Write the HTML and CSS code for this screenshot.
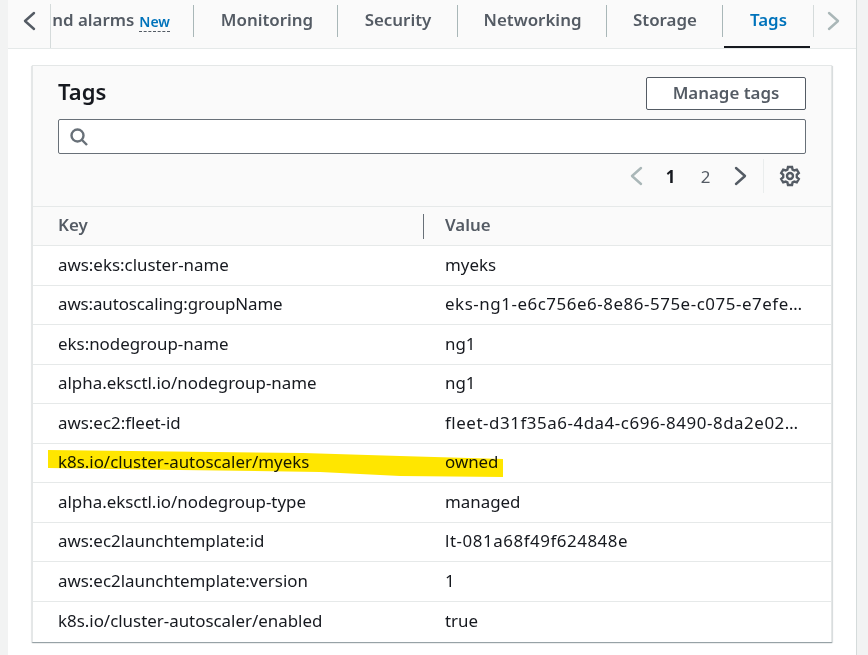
FILE: index.html
```html
<!DOCTYPE html>
<html lang="en">
<head>
<meta charset="utf-8">
<title>Tags</title>
<link rel="stylesheet" href="styles.css">
</head>
<body>
<div class="page">
  <main class="main">
    <nav class="tabbar">
      <button class="arrow arrow-left" aria-label="Previous">
        <svg width="16" height="20" viewBox="0 0 16 20"><path d="M13 2 4 10l9 8" class="chev"/></svg>
      </button>
      <div class="tabs">
        <div class="tab tab-first"><span class="clipped">nd alarms</span> <span class="new">New</span></div>
        <div class="tab tab-mon">Monitoring</div>
        <div class="tab tab-sec">Security</div>
        <div class="tab tab-net">Networking</div>
        <div class="tab tab-sto">Storage</div>
        <div class="tab tab-tags">Tags</div>
      </div>
      <button class="arrow arrow-right" aria-label="Next">
        <svg width="16" height="20" viewBox="0 0 16 20"><path d="M3 2l9 8-9 8" class="chev chev-off"/></svg>
      </button>
    </nav>
    <section class="card">
      <header class="card-head">
        <div class="title-row">
          <h2 class="title">Tags</h2>
          <button class="manage">Manage tags</button>
        </div>
        <div class="search">
          <svg width="20" height="20" viewBox="0 0 20 20"><circle cx="8.5" cy="8.5" r="6" class="ico"/><path d="M13 13l5 5" class="ico"/></svg>
        </div>
        <div class="pager">
          <svg class="pg-prev" width="14" height="20" viewBox="0 0 14 20"><path d="M12 2 3 10l9 8" class="chev chev-off"/></svg>
          <span class="pg pg-on">1</span>
          <span class="pg">2</span>
          <svg class="pg-next" width="14" height="20" viewBox="0 0 14 20"><path d="M2 2l9 8-9 8" class="chev chev-dark"/></svg>
          <span class="pg-sep"></span>
          <svg class="gear" width="22" height="22" viewBox="0 0 22 22"><path class="ico" d="M9 2h4l.6 2.6 1.7.9 2.5-.9 2 3.4-2 1.8v2.4l2 1.8-2 3.4-2.5-.9-1.7.9L13 20H9l-.6-2.6-1.7-.9-2.5.9-2-3.4 2-1.8V9.8l-2-1.8 2-3.4 2.5.9 1.7-.9z"/><circle class="ico" cx="11" cy="11" r="3"/></svg>
        </div>
      </header>
      <div class="thead">
        <div class="th th-key">Key</div>
        <div class="th th-val">Value</div>
      </div>
      <div class="row"><div class="k">aws:eks:cluster-name</div><div class="v">myeks</div></div>
      <div class="row"><div class="k k-tight">aws:autoscaling:groupName</div><div class="v v-id">eks-ng1-e6c756e6-8e86-575e-c075-e7efe…</div></div>
      <div class="row"><div class="k">eks:nodegroup-name</div><div class="v">ng1</div></div>
      <div class="row"><div class="k">alpha.eksctl.io/nodegroup-name</div><div class="v">ng1</div></div>
      <div class="row"><div class="k">aws:ec2:fleet-id</div><div class="v v-id">fleet-d31f35a6-4da4-c696-8490-8da2e02…</div></div>
      <div class="row"><div class="k">k8s.io/cluster-autoscaler/myeks</div><div class="v">owned</div></div>
      <div class="row"><div class="k">alpha.eksctl.io/nodegroup-type</div><div class="v">managed</div></div>
      <div class="row"><div class="k">aws:ec2launchtemplate:id</div><div class="v v-id">lt-081a68f49f624848e</div></div>
      <div class="row"><div class="k">aws:ec2launchtemplate:version</div><div class="v">1</div></div>
      <div class="row"><div class="k">k8s.io/cluster-autoscaler/enabled</div><div class="v">true</div></div>
    </section>
  </main>
  <svg class="marker" width="868" height="655" viewBox="0 0 868 655"><path d="M48 450 303 453 400 456 503 459 503 477 400 476 320 472 180 470 48 468Z" fill="#ffe600"/></svg>
</div>
</body>
</html>
```
FILE: styles.css
```css
* { box-sizing: border-box; }
html, body { margin: 0; padding: 0; }
body {
  width: 868px;
  height: 655px;
  overflow: hidden;
  background: #f2f3f3;
  font-family: "Noto Sans", "Open Sans", sans-serif;
  color: #16191f;
}
.page { position: relative; width: 868px; height: 655px; }
.main {
  width: 849px;
  height: 655px;
  margin-left: 8px;
  background: #fff;
  border-right: 1px solid #d5dbdb;
}
.tabbar {
  display: flex;
  align-items: stretch;
  height: 49px;
  background: #fafafa;
  border-bottom: 1px solid #e5e9e9;
}
.arrow {
  border: 0;
  padding: 0;
  background: none;
  display: flex;
  align-items: center;
}
.arrow-left { width: 42px; justify-content: flex-start; padding-left: 13px; padding-bottom: 6px; }
.arrow-right { width: 42px; padding-left: 12px; padding-bottom: 6px; }
.chev { fill: none; stroke: #545b64; stroke-width: 2.4; stroke-linecap: round; stroke-linejoin: round; }
.chev-off { stroke: #aab7b8; }
.chev-dark { stroke: #545b64; }
.tabs {
  flex: 1;
  display: flex;
  overflow: hidden;
  border-left: 1px solid #d5dbdb;
  margin: 4px 0 0;
  position: relative;
}
.tab {
  height: 44px;
  display: flex;
  align-items: center;
  justify-content: center;
  gap: 5px;
  font-size: 16.9px;
  font-weight: 600;
  color: #545b64;
  padding-bottom: 14px;
  white-space: nowrap;
  position: relative;
}
.tab::after {
  content: "";
  position: absolute;
  right: 0;
  top: 1px;
  height: 32px;
  width: 1px;
  background: #a9b7b8;
}
.tab-first { width: 143px; justify-content: flex-end; padding-right: 24px; }
.tab-mon { width: 144px; padding-left: 2px; }
.tab-sec { width: 120px; }
.tab-net { width: 149px; }
.tab-sto { width: 116px; }
.tab-tags { width: 91px; color: #0073bb; }
.tab-tags::before {
  content: "";
  position: absolute;
  left: 1px;
  right: 4px;
  bottom: 0;
  height: 2px;
  background: #16191f;
}
.tab-tags::after { background: #d5dbdb; }
.new {
  font-size: 14px;
  color: #0073bb;
  border-bottom: 1px dashed #545b64;
  line-height: 19px;
  margin-top: 6px;
}
.card {
  width: 800px;
  height: 577px;
  margin: 16px 0 0 24px;
  background: #fff;
  border: 1px solid #e4e7e7;
  border-bottom: 0;
  box-shadow: 0 1px 1px 0 rgba(0, 28, 36, .3), 1px 1px 1px 0 rgba(0, 28, 36, .1), -1px 1px 1px 0 rgba(0, 28, 36, .05);
}
.card-head {
  height: 141px;
  padding: 11px 25px 0 25px;
  background: #fafafa;
  border-bottom: 1px solid #e6e9e9;
}
.title-row { display: flex; justify-content: space-between; align-items: center; height: 33px; }
.title { margin: 0 0 4px; font-size: 22px; font-weight: 600; line-height: 29px; color: #16191f; }
.manage {
  width: 160px;
  height: 33px;
  border: 1px solid #545b64;
  border-radius: 2px;
  background: #fff;
  font-family: inherit;
  font-size: 16.9px;
  font-weight: 600;
  color: #545b64;
  padding: 0 0 3px;
}
.search {
  height: 35px;
  margin-top: 9px;
  background: #fff;
  border: 1px solid #687078;
  border-radius: 2px;
  display: flex;
  align-items: center;
  padding-left: 10px;
}
.ico { fill: none; stroke: #687078; stroke-width: 2.4; }
.gear .ico { stroke: #545b64; }
.pager {
  display: flex;
  align-items: center;
  justify-content: flex-end;
  height: 34px;
  margin-top: 5px;
  padding-right: 5px;
}
.pg { width: 35px; text-align: center; font-size: 16.9px; color: #545b64; }
.pg-on { font-weight: 700; color: #16191f; }
.pg-prev { margin-right: 10px; }
.pg-next { margin-left: 11px; }
.pg-sep { width: 1px; height: 34px; background: #eaeded; margin: 0 15px 0 15px; }
.gear { display: block; }
.thead {
  display: flex;
  height: 39px;
  background: #fafafa;
  border-bottom: 1px solid #e6e9e9;
  align-items: center;
}
.th { font-size: 16.9px; font-weight: 600; color: #545b64; padding-bottom: 2px; }
.th-key { width: 391px; padding-left: 25px; height: 25px; border-right: 1px solid #687078; line-height: 22px; }
.th-val { padding-left: 21px; height: 25px; line-height: 22px; }
.row {
  display: flex;
  align-items: center;
  height: 39.5px;
  padding-bottom: 2px;
  border-bottom: 1px solid #e6e9e9;
  font-size: 16.9px;
  position: relative;
  z-index: 1;
}
.row:last-child { border-bottom: 0; }
.k { width: 412px; padding-left: 25px; white-space: nowrap; }
.k-tight { letter-spacing: -.1px; }
.v { width: 380px; white-space: nowrap; }
.v-id { letter-spacing: .55px; }
.marker {
  position: absolute;
  left: 0;
  top: 0;
  mix-blend-mode: multiply;
  z-index: 2;
  pointer-events: none;
}
```
